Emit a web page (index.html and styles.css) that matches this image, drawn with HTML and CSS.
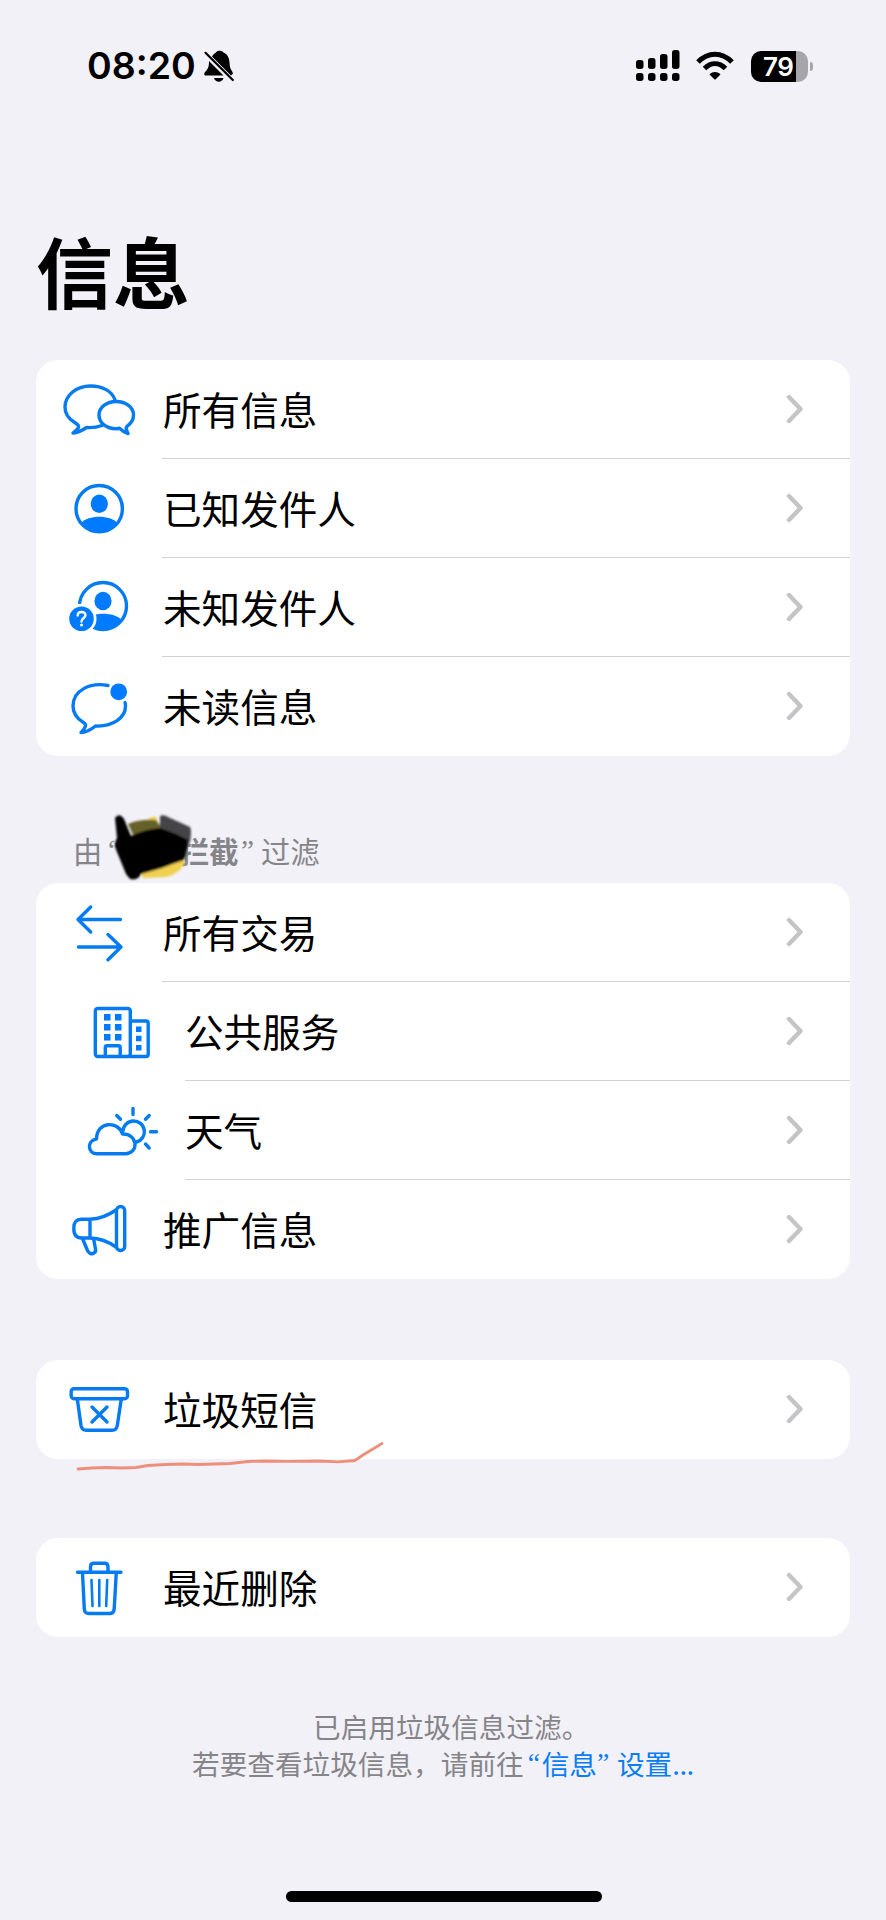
FILE: index.html
```
<!DOCTYPE html>
<html lang="zh-CN">
<head>
<meta charset="utf-8">
<title>信息</title>
<link rel="stylesheet" href="styles.css">
</head>
<body>
<svg width="0" height="0" class="defs"><symbol id="chev" viewBox="0 0 20 30"><path d="M4 3 L15.5 15 L4 27" fill="none" stroke="#c4c4c6" stroke-width="4.4" stroke-linecap="round" stroke-linejoin="round"/></symbol></svg>
<main class="screen">
  <header class="status">
    <span class="time">08:20</span>
    <svg class="bell" viewBox="200 46 40 40"><path d="M212 56.5 C213 54 215.500 53 216 52.500 C217 50 222 50 223.500 52.500 C229 55 229.500 60 229.800 66 C230 69 232.500 71 233 73.500 L231 75.500 Z M209 61 L223.500 75.500 H206 C203.500 75.500 204 73 205.500 71.500 C208.500 68.500 209 66 209 61 Z M214 78 H223.500 C222 83 215.500 83 214 78 Z"/><path d="M205.500 52.800 L232.800 80" stroke="#000" stroke-width="2.200" stroke-linecap="round"/></svg>
    <svg class="signal" viewBox="634 46 48 38"><rect x="636" y="60" width="7.500" height="9" rx="2.700"/><rect x="648" y="58" width="7.500" height="11" rx="2.700"/><rect x="660" y="54" width="7.500" height="15" rx="2.700"/><rect x="672" y="50" width="7.500" height="19" rx="2.700"/><rect x="636" y="73" width="7.500" height="8" rx="2.700"/><rect x="648" y="73" width="7.500" height="8" rx="2.700"/><rect x="660" y="73" width="7.500" height="8" rx="2.700"/><rect x="672" y="73" width="7.500" height="8" rx="2.700"/></svg>
    <svg class="wifi" viewBox="694 46 42 38"><g fill="none" stroke="#000" stroke-width="5"><path d="M698 62 C708 51.500 722 51.500 732 62"/><path d="M704.500 68.500 C711 62.200 719 62.200 725.500 68.500"/></g><path d="M709.500 74.500 C713 71.300 717 71.300 720.500 74.500 L715.700 79.200 Q715 80 714.300 79.200 Z"/></svg>
    <div class="battery"><span class="level">79</span></div>
    <span class="cap"></span>
  </header>

  <h1 class="title">信息</h1>

  <section class="card">
    <div class="row">
      <svg class="icon" viewBox="54 360 90 99"><path d="M115 400 C112 391 102.500 386 90.500 386 C76 386 65 395.500 65 407 C65 413.500 68.500 418.500 74 422 C78 424.500 80 426 77.500 429 Q75 431.500 73 433 Q79.500 432.500 86.500 427.500 Q95 428 102 425.500"/><path d="M116.200 401.500 C106.500 401.500 99 407.500 99 415 C99 423 106.500 428.700 116.200 428.700 Q118 428.700 119.500 428.200 Q124 432.500 128 433.500 C126.500 430.500 125 428 127.500 425.800 C131.500 423 133.500 419.500 133.500 415 C133.500 407.500 126 401.500 116.200 401.500 Z"/></svg>
      <div class="cell"><span>所有信息</span><svg class="chev"><use href="#chev"/></svg></div>
    </div>
    <div class="row">
      <svg class="icon" viewBox="54 459 90 99"><circle cx="99.200" cy="508.700" r="23.200"/><ellipse class="f" cx="99.300" cy="503.800" rx="8.600" ry="9.200"/><path class="f" d="M81 523 C88 514.500 110.500 514.500 117.500 523 A23.500 23.500 0 0 1 81 523 Z"/></svg>
      <div class="cell"><span>已知发件人</span><svg class="chev"><use href="#chev"/></svg></div>
    </div>
    <div class="row">
      <svg class="icon" viewBox="54 558 90 99"><circle cx="103" cy="606" r="23.500"/><ellipse class="f" cx="103" cy="601" rx="8.600" ry="9.200"/><path class="f" d="M84.500 620 C92 611.800 114.500 611.800 121.500 620 A23.500 23.500 0 0 1 84.500 620 Z"/><circle cx="81.500" cy="618.800" r="15" class="w"/><circle cx="81.500" cy="618.800" r="12.300" class="f"/><path d="M77.700 615.500 C77.700 610.800 85.500 610.800 85.500 615.300 C85.500 618 81.500 618 81.500 621.500" class="q"/><circle cx="81.500" cy="625" r="1.500" class="w"/></svg>
      <div class="cell"><span>未知发件人</span><svg class="chev"><use href="#chev"/></svg></div>
    </div>
    <div class="row">
      <svg class="icon" viewBox="54 657 90 99"><path d="M108 685.500 C90 682 73 690.500 73 706 C73 713 77.500 719 83.500 722.500 C86.500 724.300 86 726 84 729 L81 732.500 Q87.500 732.500 95.500 726 C113 727 125.500 717.500 125.500 706 Q125.500 704 125 702.500"/><circle class="f" cx="118.700" cy="691.800" r="8.400"/></svg>
      <div class="cell"><span>未读信息</span><svg class="chev"><use href="#chev"/></svg></div>
    </div>
  </section>

  <div class="caption">
    <span class="by">由</span><span class="oq">“</span><b>拦截</b><span class="cq">”</span><span>过滤</span>
    <svg class="scribble" viewBox="105 805 95 80"><defs><filter id="soft" x="-10%" y="-10%" width="120%" height="120%"><feGaussianBlur stdDeviation="1.300"/></filter></defs><g filter="url(#soft)"><path d="M147 820 Q151 816 156 817 L160 828 L185 863 Q179 874 166 877 L143 878 L138 865 Z" fill="#f0d050"/><path d="M128 824 Q140 819 156 820 L166 834 L140 850 Z" fill="#66602c"/><path d="M160 816 Q164 814 168 817 L190 827 Q192 830 190 842 L184 850 L160 832 Z" fill="#444447"/><path d="M115 818 Q119 812 124 819 L131 836 Q145 829 160 828 L176 834 L188 840 L187 848 L184 860 Q172 864 162 868 L141 874 Q138 881 130 879 L126 874 L117 852 Q113 844 117 838 Z" fill="#020202"/></g></svg>
  </div>

  <section class="card">
    <div class="row">
      <svg class="icon" viewBox="54 883 90 99"><path d="M120.500 919.500 H78 M90.700 907 L78 919.500 L90.700 932 M78.500 947 H121 M108 934.500 L121 947 L108 959.800"/></svg>
      <div class="cell"><span>所有交易</span><svg class="chev"><use href="#chev"/></svg></div>
    </div>
    <div class="row sub">
      <svg class="icon" viewBox="77 982 90 99"><rect x="95.300" y="1008.500" width="35" height="48" rx="2.500"/><path d="M131 1021 H146 Q148.200 1021 148.200 1023.500 V1054 Q148.200 1056.500 146 1056.500 H130 M105.300 1056 V1047.500 Q105.300 1045.800 107 1045.800 H118.500 Q120.200 1045.800 120.200 1047.500 V1056"/><path class="f" d="M104 1014h6.500v6.500h-6.500z M115 1014h6.500v6.500h-6.500z M104 1024h6.500v6.500h-6.500z M115 1024h6.500v6.500h-6.500z M104 1034h6.500v6.500h-6.500z M115 1034h6.500v6.500h-6.500z M136 1026.500h5.500v5.500h-5.500z M136 1035.800h5.500v5.500h-5.500z M136 1045h5.500v5.500h-5.500z"/></svg>
      <div class="cell"><span>公共服务</span><svg class="chev"><use href="#chev"/></svg></div>
    </div>
    <div class="row sub">
      <svg class="icon" viewBox="77 1081 90 99"><path d="M97 1153.800 C87.500 1153.800 86.500 1140.500 96.500 1139 C97 1121 118 1120.500 122.500 1134 C137.500 1133.500 139.500 1152.500 126 1153.800 Z M123 1131 A10.700 10.700 0 1 1 136.500 1142 M133 1108.500 V1114.500 M116.800 1115.500 L120.500 1119.300 M149.200 1115.500 L145.500 1119.300 M150.500 1131.800 H156.500 M145.500 1144 L149.200 1148"/></svg>
      <div class="cell"><span>天气</span><svg class="chev"><use href="#chev"/></svg></div>
    </div>
    <div class="row">
      <svg class="icon" viewBox="54 1180 90 99"><path d="M90 1219.300 H81.500 C76 1219.300 73.800 1222 73.800 1228.500 C73.800 1235 76 1238 81.500 1238 H90 Z M90 1219.300 Q104 1218.500 116 1210 M90 1238 Q104 1238.500 116 1247 M82.500 1238.500 L87.500 1250.500 Q89.500 1254.500 93 1253.500 Q96.300 1252.500 95.500 1249 L93.500 1238.500"/><rect x="116.500" y="1206.500" width="8.200" height="44" rx="4.100"/></svg>
      <div class="cell"><span>推广信息</span><svg class="chev"><use href="#chev"/></svg></div>
    </div>
  </section>

  <section class="card single">
    <div class="row">
      <svg class="icon" viewBox="54 1360 90 99"><rect x="71.200" y="1388.700" width="56.300" height="10" rx="2.800"/><path d="M77.300 1399 L81 1425.500 Q81.800 1430.300 86.500 1430.300 H112 Q116.500 1430.300 117.300 1425.500 L121.300 1399 M92 1407 L107 1422 M107 1407 L92 1422"/></svg>
      <div class="cell"><span>垃圾短信</span><svg class="chev"><use href="#chev"/></svg></div>
    </div>
    <svg class="underline" viewBox="70 1435 320 40"><path d="M78 1469 L92 1468 L106 1467.500 L122 1468 L136 1467.500 L148 1465.500 L166 1464.500 L182 1464 L198 1464.500 L214 1464 L230 1463.500 L248 1461.500 L262 1461 L290 1461.300 L318 1461 L338 1461.800 L355 1460.500 L363 1455 L382 1443.500"/></svg>
  </section>

  <section class="card single">
    <div class="row">
      <svg class="icon" viewBox="54 1538 90 99"><path d="M77.500 1572.300 H121 M90.500 1572 V1567 Q90.500 1563.300 94 1563.300 H104.500 Q108 1563.300 108 1567 V1572 M82.500 1572.500 L84.300 1609 Q84.500 1613.500 89 1613.500 H109.500 Q113.800 1613.500 114.200 1609 L116.300 1572.500"/><path class="thin" d="M91.500 1580 L92.500 1606 M99.300 1580 V1606 M107.200 1580 L106.200 1606"/></svg>
      <div class="cell"><span>最近删除</span><svg class="chev"><use href="#chev"/></svg></div>
    </div>
  </section>

  <footer class="note">
    <div class="line first">已启用垃圾信息过滤。</div>
    <div class="line">若要查看垃圾信息，请前往<a class="link"><span class="fo">“</span>信息<span class="fc">”</span>设置<span class="dots">...</span></a></div>
  </footer>
  <div class="home"></div>
</main>
</body>
</html>
```

FILE: styles.css
```
* { box-sizing: border-box; }
body { margin: 0; background: #f2f1f7; color: #000; font-family: "Noto Sans CJK SC", sans-serif; }
.defs { position: absolute; }
.screen { height: 1920px; padding: 0 36px; display: flex; flex-direction: column; overflow: hidden; }
.status { height: 132px; padding-left: 51px; display: flex; align-items: center; flex: none; }
.time { width: 113px; font: 600 37.5px/40px Inter, sans-serif; letter-spacing: 0; white-space: nowrap; }
.bell { width: 40px; height: 40px; }
.signal { width: 48px; height: 38px; margin: -2px 12px 0 394px; }
.wifi { width: 42px; height: 38px; margin-top: -2px; }
.battery { width: 57px; height: 31px; margin-left: 15px; border-radius: 10px; background: linear-gradient(to right, #000 45px, #a6a6aa 45px); }
.level { display: block; padding-left: 12px; color: #fff; font: 600 26px/32px Inter, sans-serif; letter-spacing: -0.5px; }
.cap { width: 3px; height: 9px; margin-left: 2px; border-radius: 0 4px 4px 0; background: #a6a6aa; }
.title { margin: 80px 0 0; height: 148px; font-size: 77px; line-height: 116px; font-weight: 700; }
.card { width: 814px; flex: none; border-radius: 22px; background: #fff; position: relative; }
.row { height: 99px; padding-left: 18px; display: flex; }
.row.sub { padding-left: 41px; }
.icon { width: 90px; height: 99px; flex: none; fill: none; stroke: #057bf2; stroke-width: 3.4; stroke-linecap: round; stroke-linejoin: round; }
.icon .f { fill: #007bff; stroke: none; }
.icon .w { fill: #fff; stroke: none; }
.icon .q { stroke: #fff; stroke-width: 2.4; }
.icon .thin { stroke-width: 2.6; }
.cell { flex: 1; margin-left: 18px; padding-right: 45px; display: flex; justify-content: space-between; align-items: center; border-bottom: 1.5px solid #d2d2d4; font-size: 38.6px; line-height: 56px; }
.cell span { padding: 0 0 3px 1px; }
.row.sub .cell span { padding-left: 0; }
.row:last-of-type .cell { border-bottom-color: transparent; }
.chev { width: 20px; height: 30px; }
.caption { height: 127px; padding: 73px 0 0 37px; display: flex; flex: none; position: relative; color: #858589; font-size: 29.3px; line-height: 42px; }
.by { width: 37px; }
.oq, .cq { font-family: "Liberation Serif", serif; }
.oq { width: 72px; margin-left: -2px; }
.caption b { width: 61px; }
.cq { width: 20px; }
.scribble { position: absolute; left: 69px; top: 49px; width: 95px; height: 80px; }
.single { margin-top: 81px; }
.single + .single { margin-top: 79px; }
.underline { position: absolute; left: 34px; top: 75px; width: 320px; height: 40px; fill: none; stroke: #ee8f7c; stroke-width: 2.8; stroke-linecap: round; stroke-linejoin: round; }
.note { padding-top: 71px; color: #858589; font-size: 27.65px; line-height: 36.5px; }
.line { padding-left: 156px; white-space: nowrap; display: flex; }
.first { padding-left: 277px; }
.link { color: #0a7df2; display: flex; }
.fo, .fc { font-family: "Liberation Serif", serif; }
.fo { width: 18px; padding-left: 4px; }
.fc { width: 20px; }
.dots { letter-spacing: -0.5px; }
.home { width: 316px; height: 11px; margin: auto 0 18px 250px; border-radius: 6px; background: #000; }
```
